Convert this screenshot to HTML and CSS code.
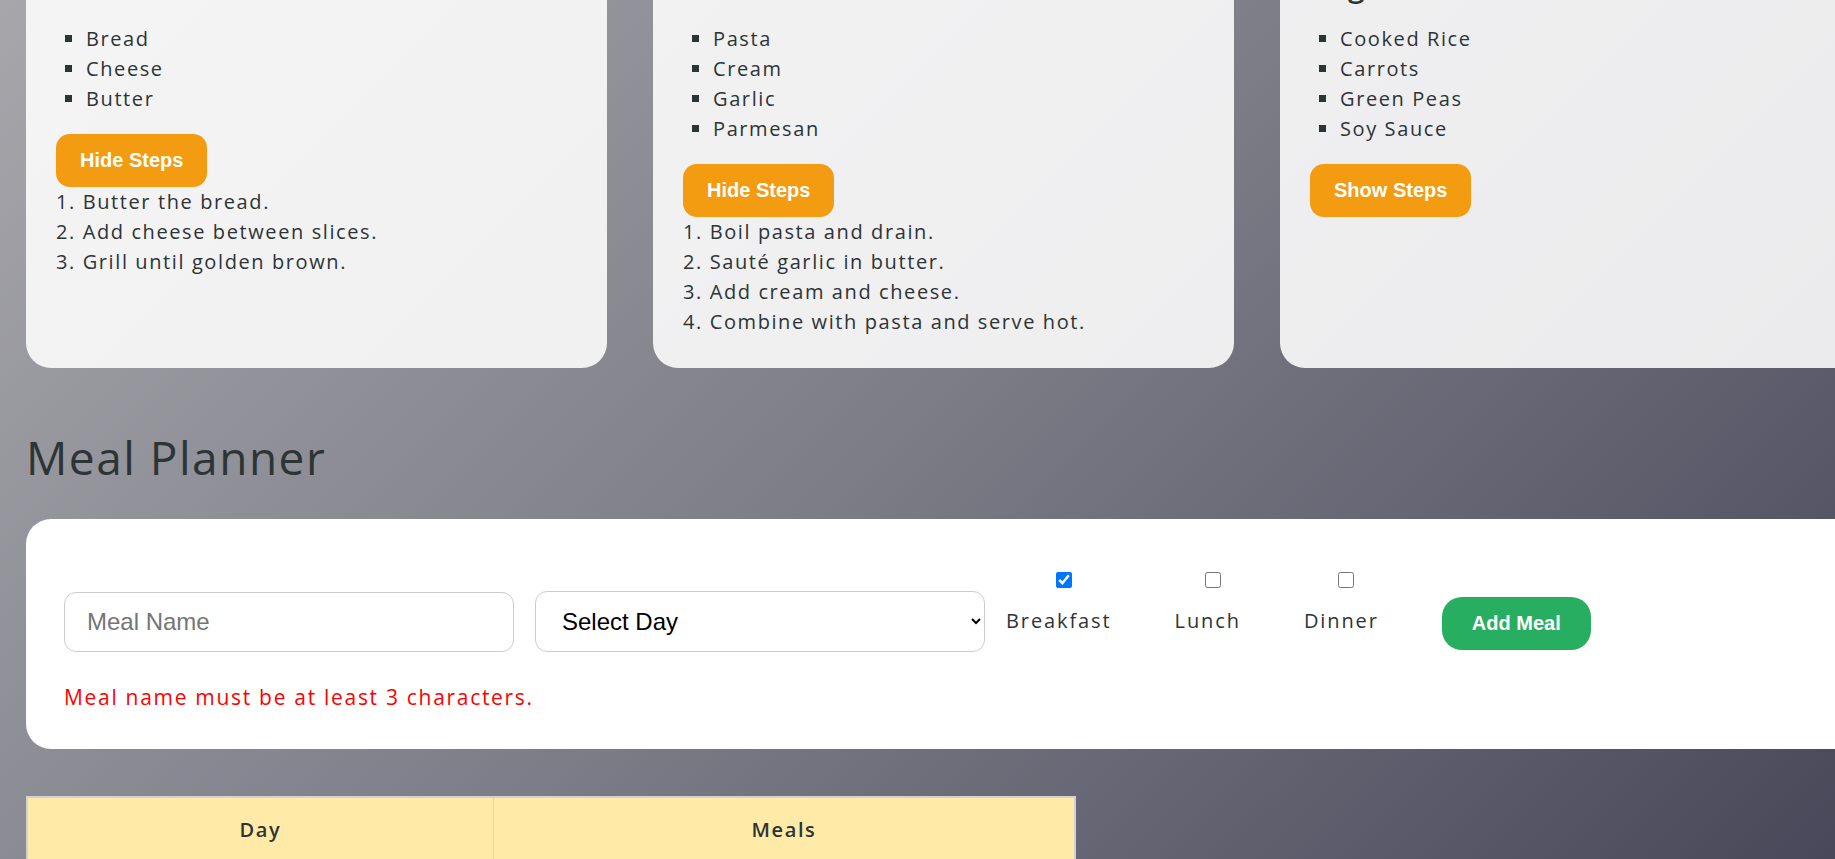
FILE: index.html
```html
<!DOCTYPE html>
<html lang="en">
<head>
<meta charset="utf-8">
<title>Recipes &amp; Meal Planner</title>
<link rel="stylesheet" href="styles.css">
</head>
<body>
<div class="page">
  <section class="recipes">
    <article class="recipe-card">
      <h3 class="recipe-title">Grilled Cheese</h3>
      <ul class="ingredients">
        <li>Bread</li>
        <li>Cheese</li>
        <li>Butter</li>
      </ul>
      <button class="btn-steps" type="button">Hide Steps</button>
      <ol class="steps">
        <li>Butter the bread.</li>
        <li>Add cheese between slices.</li>
        <li>Grill until golden brown.</li>
      </ol>
    </article>
    <article class="recipe-card">
      <h3 class="recipe-title">Fettuccine Alfredo</h3>
      <ul class="ingredients">
        <li>Pasta</li>
        <li>Cream</li>
        <li>Garlic</li>
        <li>Parmesan</li>
      </ul>
      <button class="btn-steps" type="button">Hide Steps</button>
      <ol class="steps">
        <li>Boil pasta and drain.</li>
        <li>Sauté garlic in butter.</li>
        <li>Add cream and cheese.</li>
        <li>Combine with pasta and serve hot.</li>
      </ol>
    </article>
    <article class="recipe-card">
      <h3 class="recipe-title">Vegetable Fried Rice</h3>
      <ul class="ingredients">
        <li>Cooked Rice</li>
        <li>Carrots</li>
        <li>Green Peas</li>
        <li>Soy Sauce</li>
      </ul>
      <button class="btn-steps" type="button">Show Steps</button>
    </article>
  </section>

  <h2 class="section-title">Meal Planner</h2>

  <form class="planner-card">
    <div class="planner-row">
      <input class="field" type="text" placeholder="Meal Name">
      <select class="field">
        <option>Select Day</option>
        <option>Monday</option>
        <option>Tuesday</option>
        <option>Wednesday</option>
        <option>Thursday</option>
        <option>Friday</option>
        <option>Saturday</option>
        <option>Sunday</option>
      </select>
      <label class="meal-type"><input class="meal-check" type="checkbox" checked><span>Breakfast</span></label>
      <label class="meal-type"><input class="meal-check" type="checkbox"><span>Lunch</span></label>
      <label class="meal-type"><input class="meal-check" type="checkbox"><span>Dinner</span></label>
      <button class="btn-add" type="button">Add Meal</button>
    </div>
    <p class="error">Meal name must be at least 3 characters.</p>
  </form>

  <table class="meal-table">
    <colgroup>
      <col class="col-day">
      <col class="col-meals">
    </colgroup>
    <thead>
      <tr><th>Day</th><th class="th-meals">Meals</th></tr>
    </thead>
  </table>
</div>
</body>
</html>
```

FILE: styles.css
```css
html {
  height: 100%;
  overflow: hidden;
  background: #48485a linear-gradient(135deg, #a6a6ab 0%, #7c7c87 50%, #48485a 100%) no-repeat;
}

body {
  margin: 0;
  overflow: hidden;
  font-family: "Open Sans", "Noto Sans", sans-serif;
  font-size: 20px;
  line-height: 30px;
  letter-spacing: 1.6px;
  color: #2d3436;
}

.page {
  width: 1835px;
  margin: -62px 0 0 26px;
}

.recipes {
  display: grid;
  grid-template-columns: repeat(3, 1fr);
  gap: 46px;
}

.recipe-card {
  background: rgba(255, 255, 255, 0.88);
  border-radius: 25px;
  padding: 30px 30px 31px;
}

.recipe-title {
  margin: 0;
  font-size: 30px;
  line-height: 36px;
  font-weight: 600;
  letter-spacing: 1px;
}

.ingredients {
  margin: 20px 0;
  padding-left: 30px;
  list-style: square;
}

.btn-steps {
  display: block;
  margin: 0;
  padding: 15px 24px;
  border: none;
  border-radius: 14px;
  background: #f39c12;
  color: #fff;
  font: 700 20px/23px "Liberation Sans", Arial, sans-serif;
  letter-spacing: normal;
  cursor: pointer;
}

.steps {
  margin: 0;
  padding: 0;
  list-style: decimal inside;
}

.section-title {
  margin: 62px 0 34px;
  font-size: 46px;
  line-height: 55px;
  font-weight: 500;
  letter-spacing: 1.5px;
}

.planner-card {
  background: #fff;
  border-radius: 25px;
  padding: 53px 38px 37px;
}

.planner-row {
  display: flex;
  align-items: flex-end;
  gap: 21px;
}

.field {
  box-sizing: border-box;
  width: 450px;
  margin: 0;
  padding: 15px 22px;
  border: 1px solid #cccccc;
  border-radius: 12px;
  background: #fff;
  color: #000;
  font: 24px "Liberation Sans", Arial, sans-serif;
  letter-spacing: normal;
}

.field::placeholder {
  color: #757575;
}

.meal-type {
  display: flex;
  flex-direction: column;
  align-items: center;
  padding-bottom: 16px;
  margin-right: 42px;
  color: #2d3436;
  letter-spacing: 1.9px;
}

.meal-check {
  width: 16px;
  height: 16px;
  margin: 0 0 18px 10px;
}

.btn-add {
  margin: 0 0 2px;
  padding: 15px 30px;
  border: none;
  border-radius: 20px;
  background: #27ae60;
  color: #fff;
  font: 700 20px/23px "Liberation Sans", Arial, sans-serif;
  letter-spacing: normal;
  cursor: pointer;
}

.error {
  margin: 30px 0 0;
  color: #ff0000;
  font-size: 21px;
  font-weight: 500;
  letter-spacing: 1.7px;
}

.meal-table {
  margin-top: 47px;
  width: 1050px;
  table-layout: fixed;
  border: 2px solid #d2d2d2;
  border-spacing: 0;
}

.col-day {
  width: 465px;
}

.meal-table th {
  padding: 17px;
  background: #ffeaa7;
  font-weight: 600;
  line-height: 30px;
  text-align: center;
}

.meal-table .th-meals {
  border-left: 1px solid rgba(0, 0, 0, 0.07);
}
```
